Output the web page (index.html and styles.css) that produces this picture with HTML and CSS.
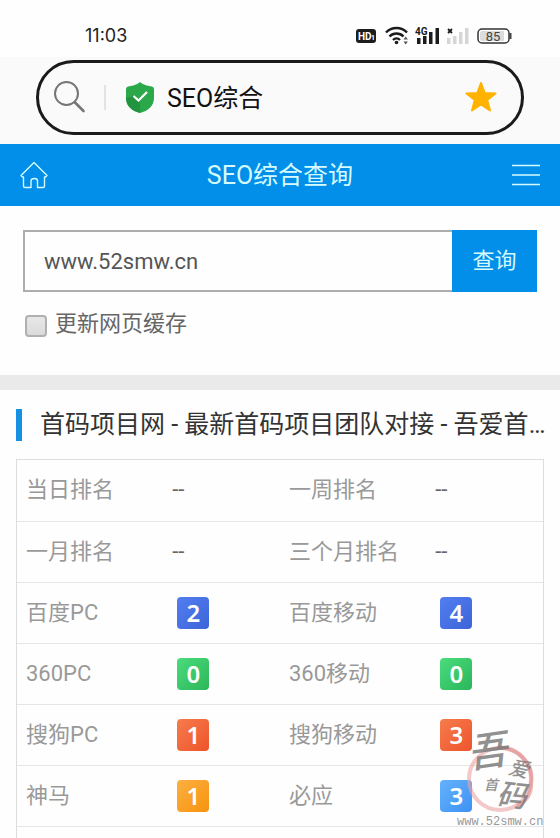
FILE: index.html
```html
<!DOCTYPE html>
<html lang="zh-CN">
<head>
    <meta charset="UTF-8">
    <meta name="viewport" content="width=device-width, initial-scale=1.0">
    <title>SEO综合查询</title>
    <link rel="stylesheet" href="styles.css">
</head>
<body>
    <div class="status-bar">
        <span class="clock">11:03</span>
        <svg class="status-icons" width="158" height="24" viewBox="0 0 158 24">
            <rect x="1" y="5" width="20" height="14" rx="3" fill="#1c1c1c"/>
            <text class="hd-text" x="3" y="16">HD</text>
            <text class="hd-sub" x="16" y="16">1</text>
            <g fill="none" stroke="#1c1c1c" stroke-width="2.4">
                <path d="M31 8.5a14.5 14.5 0 0 1 21 0"/>
                <path d="M34.5 12.5a9.8 9.8 0 0 1 14 0"/>
                <path d="M38 16a5 5 0 0 1 7 0"/>
            </g>
            <circle cx="41.5" cy="18.5" r="1.8" fill="#1c1c1c"/>
            <path d="M48.5 15.5l2.200-3 2.200 3zM48.5 17.5l2.200 3 2.200-3z" fill="#555"/>
            <g fill="#1c1c1c">
                <rect x="62" y="14" width="3.5" height="6"/>
                <rect x="68" y="12" width="3.5" height="8"/>
                <rect x="74" y="8" width="3.5" height="12"/>
                <rect x="80.5" y="4" width="3.5" height="16"/>
            </g>
            <text class="net-text" x="60" y="11">4G</text>
            <path d="M93 5l4 4M97 5l-4 4" stroke="#1c1c1c" stroke-width="1.8"/>
            <g fill="#d6d6d6">
                <rect x="92" y="14" width="3.5" height="6"/>
                <rect x="98" y="12" width="3.5" height="8"/>
                <rect x="104" y="8" width="3.5" height="12"/>
                <rect x="110" y="4" width="3.5" height="16"/>
            </g>
            <rect x="123" y="5" width="31" height="14" rx="4" fill="#fff" stroke="#333" stroke-width="1.5"/>
            <path d="M127 7h22v10h-22a2 2 0 0 1-2-2v-6a2 2 0 0 1 2-2z" fill="#dcdcdc"/>
            <path d="M155.5 9v6" stroke="#444" stroke-width="2"/>
            <text class="battery-text" x="138" y="17">85</text>
        </svg>
    </div>

    <div class="browser-bar">
        <div class="address">
            <svg width="34" height="34" viewBox="0 0 34 34" fill="none" stroke="#757575">
                <circle cx="12.5" cy="12.5" r="11.5" stroke-width="2"/>
                <path d="M21 21.5l8.500 8.500" stroke-width="2.6" stroke-linecap="round"/>
            </svg>
            <span class="divider"></span>
            <svg class="shield" width="28" height="32" viewBox="0 0 28 32">
                <path d="M14 0C16 2 21 4 26 4.500Q28 5 28 7V16C28 24 22 29 14 31C6 29 0 24 0 16V7Q0 5 2 4.500C7 4 12 2 14 0Z" fill="#2ba84a"/>
                <path d="M0 16C0 24 6 29 14 31L14 20L8 14Z" fill="#229440"/>
                <path d="M7.5 14l5 4.500L21 10" fill="none" stroke="#fff" stroke-width="2.2"/>
            </svg>
            <span class="address-text">SEO综合</span>
            <svg class="star" width="32" height="32" viewBox="0 0 32 32">
                <path d="M16 1L19.800 11L30.500 11.400L22.200 18L25 28.500L16 22.500L7 28.500L9.800 18L1.500 11.400L12.200 11Z" fill="#ffb300" stroke="#ffb300" stroke-width="2" stroke-linejoin="round"/>
            </svg>
        </div>
    </div>

    <header class="top">
        <a href="#" class="top-link" aria-label="首页">
            <svg width="28" height="28" viewBox="0 0 28 28" fill="none" stroke="#d6fbff" stroke-width="1.4" stroke-linejoin="round">
                <path d="M1 14.500L14 1.500L27 14.500L25.500 16H24.500V25Q24.500 26.500 23 26.500H17.500V20Q17.500 17.500 14.500 17.500Q11 17.500 11 20V26.500H5Q3.500 26.500 3.500 25V16H2.500Z"/>
            </svg>
        </a>
        <h1>SEO综合查询</h1>
        <button class="menu" type="button" aria-label="菜单">
            <svg width="28" height="22" viewBox="0 0 28 22" stroke="#d6fbff" stroke-width="1.6">
                <path d="M0 1.500h28M0 11h28M0 20.500h28"/>
            </svg>
        </button>
    </header>

    <form class="search">
        <div class="search-row">
            <input class="domain" type="text" value="www.52smw.cn" aria-label="域名">
            <button class="submit" type="button">查询</button>
        </div>
        <label class="refresh">
            <input type="checkbox">
            <span>更新网页缓存</span>
        </label>
    </form>

    <main class="result">
        <h2>首码项目网 - 最新首码项目团队对接 - 吾爱首码网</h2>
        <div class="rank-box">
            <table class="rank">
                <tr>
                    <th>当日排名</th><td>--</td>
                    <th>一周排名</th><td>--</td>
                </tr>
                <tr>
                    <th>一月排名</th><td>--</td>
                    <th>三个月排名</th><td>--</td>
                </tr>
                <tr>
                    <th>百度PC</th><td><span class="badge blue">2</span></td>
                    <th>百度移动</th><td><span class="badge blue">4</span></td>
                </tr>
                <tr>
                    <th>360PC</th><td><span class="badge green">0</span></td>
                    <th>360移动</th><td><span class="badge green">0</span></td>
                </tr>
                <tr>
                    <th>搜狗PC</th><td><span class="badge red">1</span></td>
                    <th>搜狗移动</th><td><span class="badge red">3</span></td>
                </tr>
                <tr>
                    <th>神马</th><td><span class="badge orange">1</span></td>
                    <th>必应</th><td><span class="badge sky">3</span></td>
                </tr>
            </table>
        </div>
    </main>

    <svg class="watermark" width="90" height="106" viewBox="0 0 90 106">
        <circle cx="45" cy="53" r="31" fill="none" stroke="#e9a3a3" stroke-width="4" opacity="0.6"/>
        <path d="M42 22A31 31 0 0 1 76 58Q77 72 62 80" fill="none" stroke="#dc7c7c" stroke-width="4" opacity="0.5"/>
        <g class="seal">
            <text x="12" y="40" font-size="40" transform="rotate(-8 30 25)">吾</text>
            <text x="29" y="64" font-size="14">首</text>
            <text x="54" y="50" font-size="20" transform="rotate(12 64 42)">爱</text>
            <text x="42" y="80" font-size="30" transform="rotate(6 56 68)">码</text>
        </g>
        <text class="site" x="2" y="99">www.52smw.cn</text>
    </svg>
</body>
</html>
```

FILE: styles.css
```css
* {
    box-sizing: border-box;
}
body {
    margin: 0;
    min-height: 100vh;
    display: flex;
    flex-direction: column;
    position: relative;
    background: #fefefe;
    color: #333;
    font-family: Roboto, "Noto Sans CJK SC", sans-serif;
    font-size: 22px;
    line-height: 30px;
}
h1, h2 {
    margin: 0;
    font-size: 25px;
    line-height: 32px;
    font-weight: 400;
}
button {
    padding: 0;
    border: 0;
    font: inherit;
}
svg {
    display: block;
}

/* phone status bar */
.status-bar {
    display: flex;
    align-items: center;
    justify-content: space-between;
    height: 57px;
    padding: 15px 47px 0 85px;
}
.clock {
    font-family: Inter, sans-serif;
    font-size: 18px;
    color: #222;
}
.hd-text {
    font: bold 10px Roboto, sans-serif;
    fill: #fff;
}
.hd-sub {
    font: bold 7px Roboto, sans-serif;
    fill: #fff;
}
.net-text {
    font: bold 10px Roboto, sans-serif;
    fill: #1c1c1c;
    stroke: #fefefe;
    stroke-width: 2px;
    paint-order: stroke;
}
.battery-text {
    font: 400 13px Roboto, sans-serif;
    fill: #444;
    text-anchor: middle;
}

/* browser address bar */
.browser-bar {
    padding: 3px 36px 9px;
    background: #fafafa;
}
.address {
    display: flex;
    align-items: center;
    height: 75px;
    padding: 0 24px 0 15px;
    border: 3px solid #1a1a1a;
    border-radius: 38px;
}
.divider {
    width: 2px;
    height: 25px;
    margin: 0 20px 0 16px;
    background: #e2e2e2;
}
.address-text {
    flex: 1;
    margin-left: 13px;
    padding-top: 2px;
    font-size: 25px;
    color: #111;
}

.top {
    display: flex;
    align-items: center;
    justify-content: space-between;
    height: 62px;
    padding: 0 20px;
    background: #028fe9;
    color: #d6fbff;
}
.top h1 {
    padding-top: 2px;
}
.menu {
    background: none;
}

.search {
    padding: 24px 23px 36px;
    border-bottom: 15px solid #eaeaea;
}
.search-row {
    display: flex;
    height: 62px;
}
.domain {
    flex: 1;
    min-width: 0;
    padding: 0 19px;
    border: 2px solid #adadad;
    border-right: 0;
    border-radius: 0;
    background: #fefefe;
    color: #555;
    font-family: inherit;
    font-size: 22px;
}
.submit {
    width: 85px;
    background: #028fe9;
    color: #d6fbff;
}
.refresh {
    display: flex;
    align-items: center;
    gap: 8px;
    margin-top: 17px;
    padding-left: 2px;
    color: #666;
}
.refresh input {
    appearance: none;
    width: 22px;
    height: 22px;
    margin: 4px 0 0;
    border: 2px solid #b0b0b0;
    border-radius: 4px;
    background: linear-gradient(#e8e8e8, #dadada);
}

.result {
    flex: 1;
    display: flex;
    flex-direction: column;
    padding: 19px 16px 0;
}
.result h2 {
    margin-right: -4px;
    padding-left: 18px;
    border-left: 6px solid #1590e2;
    overflow: hidden;
    white-space: nowrap;
    text-overflow: ellipsis;
}
.rank-box {
    flex: 1;
    margin-top: 18px;
    border: 1px solid #ddd;
    border-bottom: 0;
}
.rank {
    width: 100%;
    border-collapse: collapse;
    table-layout: fixed;
}
.rank th,
.rank td {
    height: 61px;
    padding: 0 0 0 9px;
    border-bottom: 1px solid #e6e6e6;
    text-align: left;
    font-weight: 400;
}
.rank th {
    width: 28%;
    color: #999;
}
.rank td {
    width: 22%;
    padding-left: 8px;
    color: #666;
}
.badge {
    display: block;
    width: 32px;
    height: 32px;
    margin-left: 5px;
    border-radius: 4px;
    color: #fff;
    font: 600 24px/32px "Noto Sans", sans-serif;
    text-align: center;
}
.blue {
    background: linear-gradient(135deg, #527ef0, #3c64d8);
}
.green {
    background: linear-gradient(135deg, #4bdc7c, #2bb65a);
}
.red {
    background: linear-gradient(135deg, #f67c4c, #ee542c);
}
.orange {
    background: linear-gradient(135deg, #fbb040, #f7930f);
}
.sky {
    background: linear-gradient(135deg, #64b2fb, #3f92f4);
}

.watermark {
    position: absolute;
    right: 15px;
    bottom: 6px;
}
.seal {
    font-family: "Noto Sans CJK SC", sans-serif;
    font-style: italic;
    font-weight: 500;
    fill: #777;
    opacity: 0.8;
}
.site {
    font: 12px "Liberation Mono", monospace;
    fill: #999;
}
```
